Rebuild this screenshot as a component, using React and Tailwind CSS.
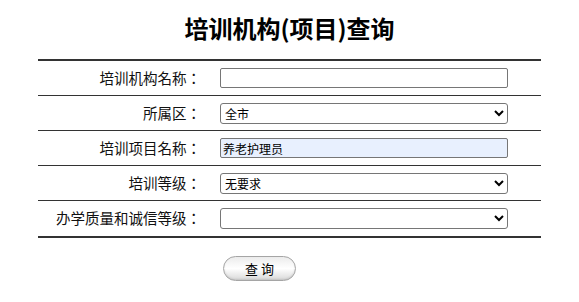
import { useState } from 'react';

const font = { fontFamily: '"Noto Sans CJK SC", "Liberation Sans", sans-serif' };
const labelFont = { fontFamily: '"Noto Sans CJK JP", "Noto Sans CJK SC", sans-serif' };

function Row({ label, children, last }) {
  return (
    <div className={`flex items-center h-[35px] ${last ? '' : 'border-b border-[#333]'}`}>
      <div className="w-[175px] pr-3 text-right text-[14.5px] text-[#111] leading-none" style={labelFont}>{label}</div>
      <div className="pl-[7px]">{children}</div>
    </div>
  );
}

export default function App() {
  const [org, setOrg] = useState('');
  const [district, setDistrict] = useState('全市');
  const [project, setProject] = useState('养老护理员');
  const [level, setLevel] = useState('无要求');
  const [quality, setQuality] = useState('');

  return (
    <div className="w-[579px] h-[302px] bg-white" style={font}>
      {/* 标题 */}
      <div className="h-[59px] flex items-center justify-center pb-[3px]">
        <h1 className="text-[24px] font-bold text-black leading-none">培训机构(项目)查询</h1>
      </div>

      <div className="w-[503px] mx-auto border-t-2 border-b-2 border-[#333]">
        <Row label="培训机构名称：">
          <input
            type="text"
            value={org}
            onChange={(e) => setOrg(e.target.value)}
            className="block w-[288px] h-[20px] border border-[#767676] rounded-[2px] bg-white px-[2px] text-[12px]"
          />
        </Row>
        <Row label="所属区：">
          <select
            value={district}
            onChange={(e) => setDistrict(e.target.value)}
            className="block w-[288px] h-[21px] border border-[#767676] rounded-[3px] bg-white text-[12px] text-black"
          >
            <option>全市</option>
          </select>
        </Row>
        <Row label="培训项目名称：">
          <input
            type="text"
            value={project}
            onChange={(e) => setProject(e.target.value)}
            className="block w-[288px] h-[20px] border border-[#767676] rounded-[2px] bg-[#e8f0fe] px-[2px] text-[12px] text-black"
          />
        </Row>
        <Row label="培训等级：">
          <select
            value={level}
            onChange={(e) => setLevel(e.target.value)}
            className="block w-[288px] h-[21px] border border-[#767676] rounded-[3px] bg-white text-[12px] text-black"
          >
            <option>无要求</option>
          </select>
        </Row>
        <Row label="办学质量和诚信等级：" last>
          <select
            value={quality}
            onChange={(e) => setQuality(e.target.value)}
            className="block w-[288px] h-[21px] border border-[#767676] rounded-[3px] bg-white text-[12px] text-black"
          >
            <option value=""></option>
          </select>
        </Row>
      </div>

      <div className="pl-[223px] pt-[17px]">
        <button className="w-[73px] h-[25px] rounded-full border border-[#a5a5a5] bg-gradient-to-b from-[#ececec] via-white to-[#d9d9d9] shadow-[inset_0_-1px_2px_rgba(0,0,0,0.12)] text-[13px] text-black leading-none">
          查 询
        </button>
      </div>
    </div>
  );
}
